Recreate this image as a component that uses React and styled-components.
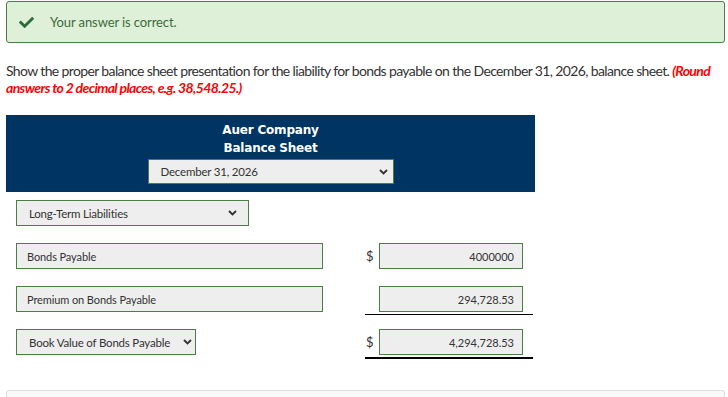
import styled, { createGlobalStyle } from "styled-components";
import { FaCheck } from "react-icons/fa";

const GlobalStyle = createGlobalStyle`
  html, body {
    margin: 0;
    padding: 0;
    background: #fff;
  }
  body {
    font-family: Lato, "Open Sans", sans-serif;
    color: #333;
  }
  * {
    box-sizing: border-box;
  }
`;

const Chevron = () => (
  <svg width="9" height="6" viewBox="0 0 9 6">
    <path d="M1 1 L4.5 4.5 L8 1" fill="none" stroke="#333" strokeWidth="1.9" />
  </svg>
);

const Dropdown = ({ value, width, height, pad = "12px", arrow = "12px" }) => (
  <SelectWrap width={width} height={height}>
    <NativeSelect defaultValue={value} pad={pad}>
      <option>{value}</option>
    </NativeSelect>
    <ChevronSlot arrow={arrow}>
      <Chevron />
    </ChevronSlot>
  </SelectWrap>
);

const App = () => {
  const rows = [
    { label: "Bonds Payable", dollar: true, amount: "4000000", rule: "none" },
    { label: "Premium on Bonds Payable", dollar: false, amount: "294,728.53", rule: "single" },
  ];

  return (
    <>
      <GlobalStyle />
      <Page>
        <Alert>
          <CheckIcon>
            <FaCheck />
          </CheckIcon>
          <AlertText>Your answer is correct.</AlertText>
        </Alert>

        <Question>
          Show the proper balance sheet presentation for the liability for bonds payable on the
          December 31, 2026, balance sheet. <Hint>(Round answers to 2 decimal places, e.g. 38,548.25.)</Hint>
        </Question>

        <SheetHeader>
          <Company>Auer Company</Company>
          <Company>Balance Sheet</Company>
          <DateSlot>
            <Dropdown value="December 31, 2026" width="246px" height="25px" arrow="6px" />
          </DateSlot>
        </SheetHeader>

        <Form>
          <Row>
            <Dropdown value="Long-Term Liabilities" width="233px" height="26px" />
          </Row>
          {rows.map((r, i) => (
            <Row key={i}>
              <LabelCell>
                <TextBox value={r.label} readOnly />
              </LabelCell>
              <AmountCell rule={r.rule}>
                <Dollar>{r.dollar ? "$" : ""}</Dollar>
                <AmountBox value={r.amount} readOnly />
              </AmountCell>
            </Row>
          ))}
          <Row>
            <LabelCell>
              <Dropdown value="Book Value of Bonds Payable" width="180px" height="26px" arrow="4px" />
            </LabelCell>
            <AmountCell rule="double">
              <Dollar>$</Dollar>
              <AmountBox value="4,294,728.53" readOnly />
            </AmountCell>
          </Row>
        </Form>

        <NextPanel />
      </Page>
    </>
  );
};

export default App;

const Page = styled.div`
  width: 728px;
  padding: 1px 3px 0 6px;
`;

const Alert = styled.div`
  height: 42px;
  display: flex;
  align-items: center;
  padding-left: 12px;
  background-color: #dff0d8;
  border: 1px solid #4c7d45;
  border-radius: 3px;
`;

const CheckIcon = styled.span`
  display: flex;
  font-size: 15px;
  color: #2f6b3a;
  margin-right: 16px;
`;

const AlertText = styled.span`
  font-size: 13px;
  color: #3d6b3c;
  letter-spacing: -0.1px;
`;

const Question = styled.p`
  margin: 19px 0 0;
  font-size: 14px;
  line-height: 17px;
  color: #333;
  letter-spacing: -0.63px;
`;

const Hint = styled.span`
  color: #ff0000;
  font-weight: 700;
  font-style: italic;
`;

const SheetHeader = styled.div`
  width: 529px;
  margin-top: 19px;
  padding: 6px 0 8px;
  background-color: #003462;
  display: flex;
  flex-direction: column;
  align-items: center;
`;

const Company = styled.div`
  color: #fff;
  font-family: "DejaVu Sans", Verdana, sans-serif;
  font-size: 12px;
  font-weight: 700;
  line-height: 18px;
  letter-spacing: -0.2px;
`;

const DateSlot = styled.div`
  margin-top: 2px;
`;

const SelectWrap = styled.div`
  position: relative;
  width: ${(p) => p.width};
  height: ${(p) => p.height};
`;

const NativeSelect = styled.select`
  appearance: none;
  width: 100%;
  height: 100%;
  padding: 0 16px 0 ${(p) => p.pad};
  background-color: #eeeeee;
  border: 1px solid #4c7d45;
  border-radius: 0;
  font-family: Lato, "Open Sans", sans-serif;
  font-size: 11.5px;
  letter-spacing: -0.2px;
  color: #333;
  outline: none;
`;

const ChevronSlot = styled.span`
  position: absolute;
  right: ${(p) => p.arrow};
  top: 50%;
  transform: translateY(-50%);
  display: flex;
  pointer-events: none;
`;

const Form = styled.div`
  margin-top: 8px;
  padding-left: 10px;
  display: flex;
  flex-direction: column;
  gap: 17px;
`;

const Row = styled.div`
  height: 26px;
  display: flex;
  align-items: flex-start;
`;

const LabelCell = styled.div`
  width: 349px;
  flex-shrink: 0;
`;

const TextBox = styled.input`
  width: 307px;
  height: 26px;
  padding: 0 10px;
  background-color: #eeeeee;
  border: 1px solid #4c7d45;
  font-family: Lato, "Open Sans", sans-serif;
  font-size: 11px;
  letter-spacing: -0.1px;
  color: #333;
  outline: none;
`;

const AmountCell = styled.div`
  width: 163px;
  display: flex;
  align-items: center;
  padding-right: 5px;
  box-sizing: content-box;
  padding-bottom: ${(p) => (p.rule === "none" ? "0" : "2px")};
  border-bottom: ${(p) =>
    p.rule === "single" ? "1px solid #000" : p.rule === "double" ? "2px solid #000" : "none"};
`;

const Dollar = styled.span`
  width: 14px;
  flex-shrink: 0;
  font-size: 13px;
  color: #333;
  padding-left: 1px;
`;

const AmountBox = styled.input`
  width: 144px;
  height: 26px;
  padding: 0 8px;
  text-align: right;
  background-color: #eeeeee;
  border: 1px solid #4c7d45;
  font-family: Lato, "Open Sans", sans-serif;
  font-size: 11px;
  color: #333;
  outline: none;
`;

const NextPanel = styled.div`
  margin-top: 35px;
  height: 40px;
  background-color: #f9f9f9;
  border: 1px solid #dddddd;
  border-radius: 3px;
`;
